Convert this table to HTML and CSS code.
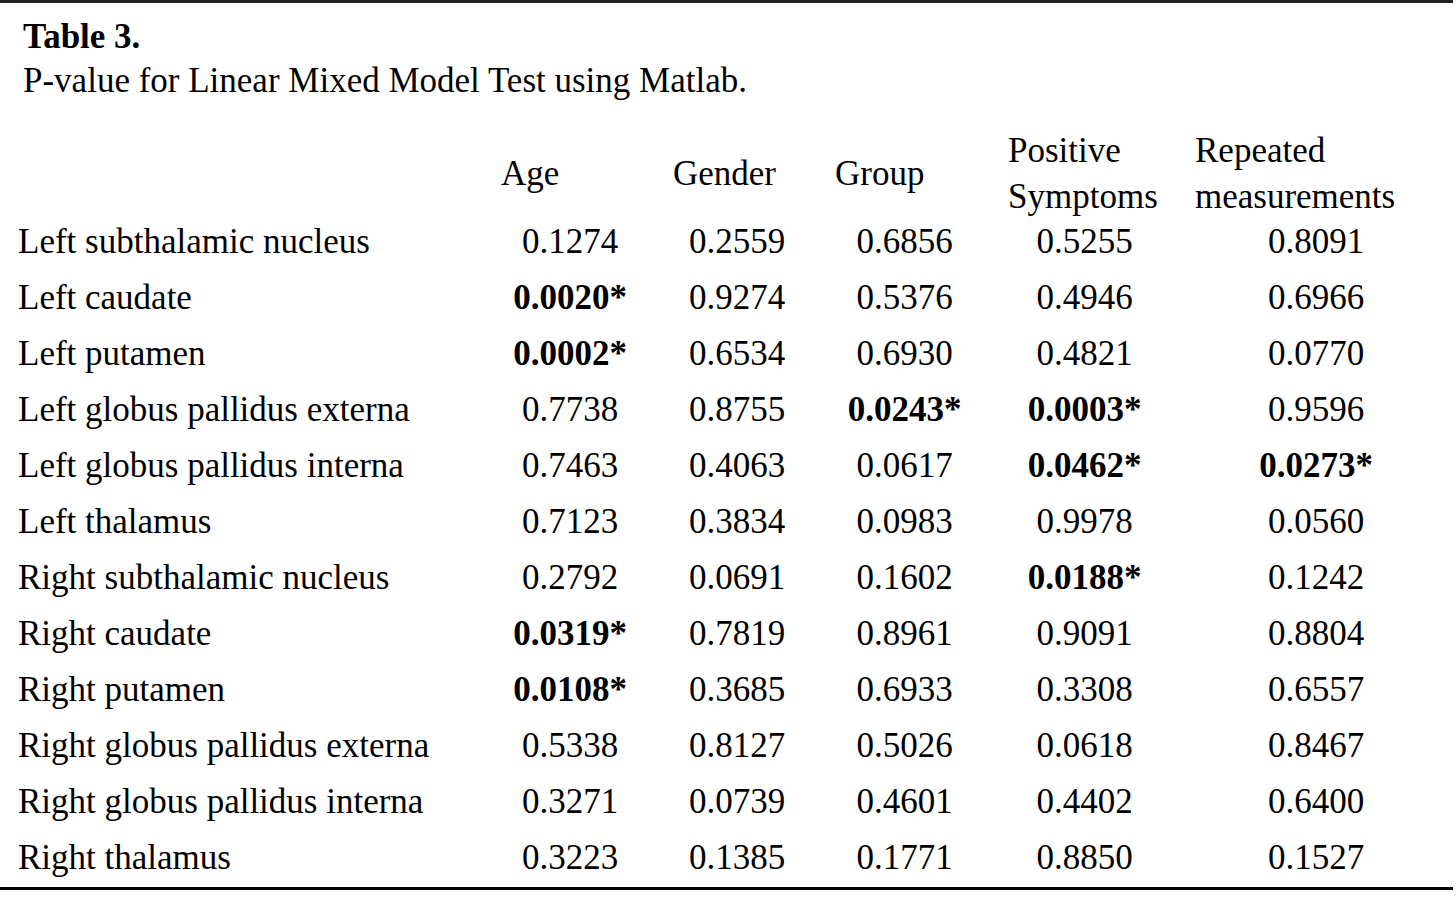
FILE: index.html
```html
<!DOCTYPE html>
<html lang="en">
<head>
<meta charset="utf-8">
<title>Table 3</title>
<link rel="stylesheet" href="styles.css">
</head>
<body>
<div class="wrap">
  <div class="caption">
    <div class="cap-title">Table 3.</div>
    <div class="cap-text">P-value for Linear Mixed Model Test using Matlab.</div>
  </div>
  <table class="tbl">
    <colgroup>
      <col class="c0"><col class="c1"><col class="c2"><col class="c3"><col class="c4"><col class="c5">
    </colgroup>
    <thead>
      <tr>
        <th class="lab"></th>
        <th>Age</th>
        <th>Gender</th>
        <th>Group</th>
        <th>Positive<br>Symptoms</th>
        <th>Repeated<br>measurements</th>
      </tr>
    </thead>
    <tbody>
      <tr><td class="lab">Left subthalamic nucleus</td><td>0.1274</td><td>0.2559</td><td>0.6856</td><td>0.5255</td><td>0.8091</td></tr>
      <tr><td class="lab">Left caudate</td><td><b>0.0020*</b></td><td>0.9274</td><td>0.5376</td><td>0.4946</td><td>0.6966</td></tr>
      <tr><td class="lab">Left putamen</td><td><b>0.0002*</b></td><td>0.6534</td><td>0.6930</td><td>0.4821</td><td>0.0770</td></tr>
      <tr><td class="lab">Left globus pallidus externa</td><td>0.7738</td><td>0.8755</td><td><b>0.0243*</b></td><td><b>0.0003*</b></td><td>0.9596</td></tr>
      <tr><td class="lab">Left globus pallidus interna</td><td>0.7463</td><td>0.4063</td><td>0.0617</td><td><b>0.0462*</b></td><td><b>0.0273*</b></td></tr>
      <tr><td class="lab">Left thalamus</td><td>0.7123</td><td>0.3834</td><td>0.0983</td><td>0.9978</td><td>0.0560</td></tr>
      <tr><td class="lab">Right subthalamic nucleus</td><td>0.2792</td><td>0.0691</td><td>0.1602</td><td><b>0.0188*</b></td><td>0.1242</td></tr>
      <tr><td class="lab">Right caudate</td><td><b>0.0319*</b></td><td>0.7819</td><td>0.8961</td><td>0.9091</td><td>0.8804</td></tr>
      <tr><td class="lab">Right putamen</td><td><b>0.0108*</b></td><td>0.3685</td><td>0.6933</td><td>0.3308</td><td>0.6557</td></tr>
      <tr><td class="lab">Right globus pallidus externa</td><td>0.5338</td><td>0.8127</td><td>0.5026</td><td>0.0618</td><td>0.8467</td></tr>
      <tr><td class="lab">Right globus pallidus interna</td><td>0.3271</td><td>0.0739</td><td>0.4601</td><td>0.4402</td><td>0.6400</td></tr>
      <tr><td class="lab">Right thalamus</td><td>0.3223</td><td>0.1385</td><td>0.1771</td><td>0.8850</td><td>0.1527</td></tr>
    </tbody>
  </table>
</div>
</body>
</html>
```

FILE: styles.css
```css
html, body {
  margin: 0;
  padding: 0;
  background: #ffffff;
}
body {
  font-family: "Liberation Serif", "Times New Roman", serif;
  font-size: 35px;
  color: #000000;
}
.wrap {
  width: 1453px;
  border-top: 3px solid #222222;
  border-bottom: 3px solid #000000;
  padding-bottom: 7px;
}
.caption {
  padding: 12px 0 0 23px;
  line-height: 44px;
}
.cap-title {
  font-weight: bold;
}
.tbl {
  margin-top: 25px;
  width: 1453px;
  table-layout: fixed;
  border-collapse: collapse;
  border-spacing: 0;
}
.c0 { width: 495px; }
.c1 { width: 172px; }
.c2 { width: 162px; }
.c3 { width: 173px; }
.c4 { width: 187px; }
.c5 { width: 264px; }
.tbl th {
  font-weight: normal;
  text-align: left;
  vertical-align: middle;
  line-height: 46px;
  padding: 0 0 0 6px;
  white-space: nowrap;
}
.tbl td {
  text-align: center;
  line-height: 44px;
  padding: 12px 22px 0 0;
  white-space: nowrap;
}
.tbl td:last-child {
  padding-right: 10px;
}
.tbl tbody tr:first-child td {
  padding-top: 0;
}
.tbl td.lab {
  text-align: left;
  padding-left: 18px;
  padding-right: 0;
}
.tbl b {
  font-weight: bold;
}
```
